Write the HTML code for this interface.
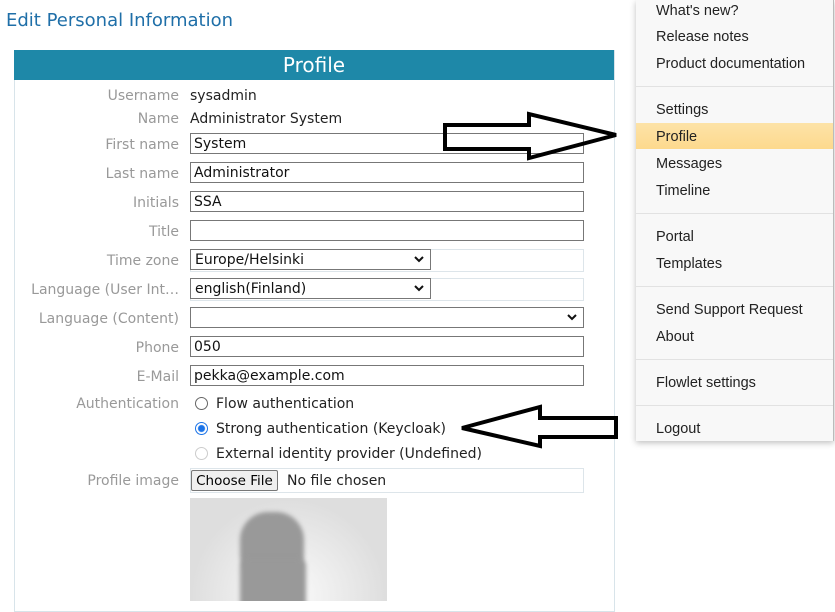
<!DOCTYPE html>
<html><head><style>
body{margin:0;width:835px;height:601px;overflow:hidden;background:#fff;font-family:"DejaVu Sans","Liberation Sans",sans-serif;font-size:14px;position:relative}
.a{position:absolute}
h1{position:absolute;left:6px;top:10px;margin:0;font-weight:normal;font-size:18px;color:#1f6fa8}
.panel{position:absolute;left:14px;top:50px;width:599px;height:560px;border:1px solid #d8e4ea}
.hdr{position:absolute;left:14px;top:50px;width:600px;height:30px;background:#1e88a8;color:#fff;font-size:20px;text-align:center;line-height:31px}
.lb{position:absolute;right:656px;color:#999;white-space:nowrap;font-size:14px}
.v{position:absolute;left:190px;color:#222;white-space:nowrap}
.in{position:absolute;left:190px;width:389px;height:19px;border:1px solid #777;background:#fff;padding-left:3px;line-height:21px;color:#111}
.ghost{position:absolute;left:190px;width:392px;height:21px;border:1px solid #dde5ea}
.sel{position:absolute;left:190px;height:19px;border:1px solid #777;background:#fff;padding-left:4px;line-height:21px;color:#111;box-sizing:content-box}
.chev{position:absolute;top:1px}
.rad{position:absolute;left:195px;width:11px;height:11px;border:1px solid #666;border-radius:50%}
.menu{position:absolute;left:636px;top:0;width:197px;height:441px;background:#f8f8f8;box-shadow:0 2px 6px rgba(0,0,0,.25);border-right:1px solid #bbb}
.mi{position:absolute;left:20px;color:#222;font-size:14.5px;font-family:"Liberation Sans","DejaVu Sans",sans-serif}
.sep{position:absolute;left:0;width:197px;height:1px;background:#e2e2e2}
</style></head><body>
<h1>Edit Personal Information</h1>
<div class="panel"></div>
<div class="hdr">Profile</div>

<div class="lb" style="top:88px">Username</div><div class="v" style="top:88px">sysadmin</div>
<div class="lb" style="top:111px">Name</div><div class="v" style="top:111px">Administrator System</div>
<div class="lb" style="top:137px">First name</div><div class="in" style="top:133px">System</div>
<div class="lb" style="top:166px">Last name</div><div class="in" style="top:162px">Administrator</div>
<div class="lb" style="top:195px">Initials</div><div class="in" style="top:191px">SSA</div>
<div class="lb" style="top:224px">Title</div><div class="in" style="top:220px"></div>

<div class="ghost" style="top:249px"></div>
<div class="lb" style="top:253px">Time zone</div><div class="sel" style="top:249px;width:235px">Europe/Helsinki<svg class="chev" style="left:223px;top:6px" width="10" height="7"><path d="M1 1l4 4 4-4" stroke="#111" stroke-width="2" fill="none"/></svg></div>
<div class="ghost" style="top:278px"></div>
<div class="lb" style="top:282px">Language (User Int…</div><div class="sel" style="top:278px;width:235px">english(Finland)<svg class="chev" style="left:223px;top:6px" width="10" height="7"><path d="M1 1l4 4 4-4" stroke="#111" stroke-width="2" fill="none"/></svg></div>
<div class="lb" style="top:311px">Language (Content)</div><div class="sel" style="top:307px;width:388px"><svg class="chev" style="left:376px;top:6px" width="10" height="7"><path d="M1 1l4 4 4-4" stroke="#111" stroke-width="2" fill="none"/></svg></div>
<div class="lb" style="top:340px">Phone</div><div class="in" style="top:336px">050</div>
<div class="lb" style="top:369px">E-Mail</div><div class="in" style="top:365px">pekka@example.com</div>

<div class="lb" style="top:396px">Authentication</div>
<div class="rad" style="top:397px"></div><div class="v" style="left:216px;top:396px">Flow authentication</div>
<div class="rad" style="top:422px;border-color:#1a73e8;background:radial-gradient(circle,#1a73e8 3px,#fff 4px)"></div><div class="v" style="left:216px;top:421px">Strong authentication (Keycloak)</div>
<div class="rad" style="top:447px;border-color:#ccc"></div><div class="v" style="left:216px;top:446px">External identity provider (Undefined)</div>

<div class="ghost" style="top:468px;height:23px"></div>
<div class="lb" style="top:473px">Profile image</div>
<div class="a" style="left:191px;top:470px;width:85px;height:19px;border:1px solid #777;border-radius:2px;background:#efefef;text-align:center;line-height:20px;font-size:13.5px">Choose File</div>
<div class="v" style="left:287px;top:473px">No file chosen</div>
<div class="a" style="left:190px;top:498px;width:197px;height:103px;background:radial-gradient(ellipse at 50% 95%,#fbfbfb,#dedede 70%);overflow:hidden">
<div class="a" style="left:50px;top:14px;width:64px;height:58px;background:#999;border-radius:28px 28px 14px 14px;filter:blur(2px)"></div>
<div class="a" style="left:50px;top:60px;width:66px;height:60px;background:#999;border-radius:8px;filter:blur(2px)"></div>
</div>

<svg class="a" style="left:0;top:0" width="835" height="601">
<polygon points="445,125 529,125 529,114 616,135 529,158 529,149 445,149" fill="none" stroke="#000" stroke-width="4" stroke-linejoin="miter"/>
<polygon points="462,428 540,407 540,418 616,418 616,437 540,437 540,446" fill="none" stroke="#000" stroke-width="4"/>
</svg>

<div class="menu">
<div class="mi" style="top:3px">What's new?</div>
<div class="mi" style="top:29px">Release notes</div>
<div class="mi" style="top:56px">Product documentation</div>
<div class="sep" style="top:86px"></div>
<div class="mi" style="top:102px">Settings</div>
<div class="a" style="left:0;top:123px;width:197px;height:26px;background:linear-gradient(#fde3a8,#fdd98d)"></div>
<div class="mi" style="top:129px">Profile</div>
<div class="mi" style="top:156px">Messages</div>
<div class="mi" style="top:183px">Timeline</div>
<div class="sep" style="top:213px"></div>
<div class="mi" style="top:229px">Portal</div>
<div class="mi" style="top:256px">Templates</div>
<div class="sep" style="top:286px"></div>
<div class="mi" style="top:302px">Send Support Request</div>
<div class="mi" style="top:329px">About</div>
<div class="sep" style="top:359px"></div>
<div class="mi" style="top:375px">Flowlet settings</div>
<div class="sep" style="top:405px"></div>
<div class="mi" style="top:421px">Logout</div>
</div>
</body></html>
